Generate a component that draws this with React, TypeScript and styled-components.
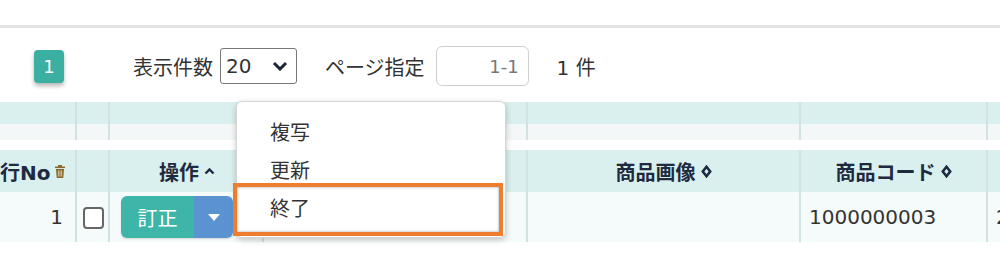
import React from 'react';
import styled, { createGlobalStyle } from 'styled-components';

const GlobalStyle = createGlobalStyle`
  body {
    margin: 0;
    background: #fff;
    font-family: 'DejaVu Sans', 'Noto Sans CJK JP', sans-serif;
    color: #333;
  }
`;

const Page = styled.div`
  width: 1000px;
  height: 254px;
  overflow: hidden;
  position: relative;
`;

const TopBar = styled.div`
  height: 25px;
  border-bottom: 3px solid #e3e3e3;
`;

const Pager = styled.div`
  height: 74px;
  display: flex;
  align-items: center;
  padding-left: 34px;
  padding-top: 2px;
  box-sizing: border-box;
  font-size: 20px;
`;

const PageBadge = styled.div`
  width: 30px;
  height: 33px;
  border-radius: 4px;
  background: #3aafa2;
  color: #fff;
  font-size: 18px;
  display: flex;
  align-items: center;
  justify-content: center;
  box-shadow: 0 3px 4px rgba(0, 0, 0, 0.28);
  margin-right: 69px;
`;

const Label = styled.span<{ $gap?: number }>`
  margin-right: ${p => p.$gap ?? 7}px;
  white-space: nowrap;
`;

const SelectBox = styled.div`
  width: 77px;
  height: 36px;
  box-sizing: border-box;
  border: 1px solid #777;
  border-radius: 3px;
  display: flex;
  align-items: center;
  justify-content: space-between;
  padding: 0 8px 0 5px;
  font-size: 20px;
  margin-right: 28px;
`;

const PageInput = styled.div`
  width: 93px;
  height: 40px;
  box-sizing: border-box;
  border: 1px solid #cfcfcf;
  border-radius: 6px;
  display: flex;
  align-items: center;
  justify-content: flex-end;
  padding-right: 9px;
  color: #777;
  font-size: 18px;
  margin-right: 28px;
`;

const TableWrap = styled.div`
  position: relative;
`;

const Table = styled.table`
  width: 1040px;
  table-layout: fixed;
  border-collapse: collapse;
  font-size: 20px;
`;

type RowKind = 'band' | 'sub' | 'gap' | 'head' | 'data';

const rowBg: Record<RowKind, string> = {
  band: '#d9f0ee',
  sub: '#f3f7f7',
  gap: '#fff',
  head: '#d9f0ee',
  data: '#f5fbfa',
};

const rowHeight: Record<RowKind, number> = {
  band: 22,
  sub: 16,
  gap: 10,
  head: 42,
  data: 50,
};

const Row = styled.tr<{ $kind: RowKind }>`
  height: ${p => rowHeight[p.$kind]}px;
  background: ${p => rowBg[p.$kind]};

  & > td {
    padding: 0;
    border-right: ${p => (p.$kind === 'gap' ? 'none' : '2px solid #d2e2e0')};
  }
`;

const Cell = styled.td<{ $align?: 'left' | 'center' | 'right' }>`
  text-align: ${p => p.$align ?? 'left'};
  vertical-align: middle;
  white-space: nowrap;
  overflow: hidden;
`;

const HeadText = styled.span<{ $pr?: number }>`
  display: inline-flex;
  align-items: center;
  gap: 5px;
  font-weight: bold;
  color: #1f2a40;
  padding-right: ${p => p.$pr ?? 0}px;
`;

const NumText = styled.span`
  padding-right: 12px;
  color: #333;
`;

const Checkbox = styled.span`
  display: inline-block;
  width: 17px;
  height: 18px;
  border: 2px solid #666;
  border-radius: 4px;
  background: #fff;
  vertical-align: middle;
  margin-left: 6px;
`;

const SplitButton = styled.div`
  display: inline-flex;
  height: 42px;
  margin-left: 11px;
  vertical-align: middle;
  border-radius: 6px;
  overflow: hidden;
  box-shadow: 0 1px 2px rgba(0, 0, 0, 0.15);
`;

const MainPart = styled.div`
  width: 73px;
  background: #3db5a8;
  color: #fff;
  display: flex;
  align-items: center;
  justify-content: center;
  font-size: 20px;
`;

const CaretPart = styled.div`
  width: 39px;
  background: #5b92d0;
  display: flex;
  align-items: center;
  justify-content: center;
`;

const CodeText = styled.span`
  padding-left: 8px;
  color: #333;
`;

const Menu = styled.div`
  position: absolute;
  left: 236px;
  top: -1px;
  width: 270px;
  height: 137px;
  box-sizing: border-box;
  background: #fff;
  border: 1px solid #d6d6d6;
  border-radius: 6px;
  box-shadow: 0 2px 6px rgba(0, 0, 0, 0.22);
  padding-top: 10px;
  font-size: 20px;
`;

const MenuItem = styled.div`
  height: 38px;
  display: flex;
  align-items: center;
  padding-left: 33px;
  color: #333;
`;

const Highlight = styled.div`
  position: absolute;
  left: -4px;
  top: 81px;
  width: 270px;
  height: 53px;
  box-sizing: border-box;
  border: 4px solid #ee7d30;
  box-shadow: inset 0 0 3px rgba(0, 0, 0, 0.35);
`;

const TrashIcon = () => (
  <svg width="10" height="13" viewBox="0 0 10 13">
    <rect x="0" y="1.5" width="10" height="1.6" fill="#8a6a2c" />
    <rect x="3" y="0" width="4" height="2" fill="#8a6a2c" />
    <path d="M1 4h8l-0.7 9H1.7z" fill="#8a6a2c" />
    <path d="M3.4 5.5v6M5 5.5v6M6.6 5.5v6" stroke="#e5d8b8" strokeWidth="0.8" />
  </svg>
);

const SortIcon = () => (
  <svg width="11" height="13" viewBox="0 0 11 13">
    <path d="M5.5 1.8L9.2 6.5L5.5 11.2L1.8 6.5Z" fill="none" stroke="#1f2a40" strokeWidth="2.6" />
  </svg>
);

const AscIcon = () => (
  <svg width="11" height="8" viewBox="0 0 11 8">
    <path d="M1.5 6.5L5.5 2.5L9.5 6.5" fill="none" stroke="#1f2a40" strokeWidth="2.4" />
  </svg>
);

const ChevronDown = () => (
  <svg width="16" height="10" viewBox="0 0 16 10">
    <path d="M2 2L8 8L14 2" fill="none" stroke="#1a2235" strokeWidth="3" />
  </svg>
);

const Caret = () => (
  <svg width="12" height="7" viewBox="0 0 12 7">
    <path d="M0 0H12L6 7Z" fill="#fff" />
  </svg>
);

const widths = [76, 33, 154, 264, 273, 187, 53];

export default function App() {
  const emptyCells = widths.map((_, i) => <Cell key={i} />);
  return (
    <Page>
      <GlobalStyle />
      <TopBar />
      <Pager>
        <PageBadge>1</PageBadge>
        <Label>表示件数</Label>
        <SelectBox>
          <span>20</span>
          <ChevronDown />
        </SelectBox>
        <Label $gap={11}>ページ指定</Label>
        <PageInput>1-1</PageInput>
        <Label>1 件</Label>
      </Pager>
      <TableWrap>
        <Table>
          <colgroup>
            {widths.map((w, i) => (
              <col key={i} style={{ width: w }} />
            ))}
          </colgroup>
          <tbody>
            <Row $kind="band">{emptyCells}</Row>
            <Row $kind="sub">{emptyCells}</Row>
            <Row $kind="gap">{emptyCells}</Row>
            <Row $kind="head">
              <Cell $align="right">
                <HeadText $pr={16}>
                  行No
                  <TrashIcon />
                </HeadText>
              </Cell>
              <Cell />
              <Cell $align="right">
                <HeadText $pr={47}>
                  操作
                  <AscIcon />
                </HeadText>
              </Cell>
              <Cell />
              <Cell $align="center">
                <HeadText>
                  商品画像
                  <SortIcon />
                </HeadText>
              </Cell>
              <Cell $align="center">
                <HeadText>
                  商品コード
                  <SortIcon />
                </HeadText>
              </Cell>
              <Cell />
            </Row>
            <Row $kind="data">
              <Cell $align="right">
                <NumText>1</NumText>
              </Cell>
              <Cell>
                <Checkbox />
              </Cell>
              <Cell>
                <SplitButton>
                  <MainPart>訂正</MainPart>
                  <CaretPart>
                    <Caret />
                  </CaretPart>
                </SplitButton>
              </Cell>
              <Cell />
              <Cell />
              <Cell>
                <CodeText>1000000003</CodeText>
              </Cell>
              <Cell>
                <CodeText>2</CodeText>
              </Cell>
            </Row>
          </tbody>
        </Table>
        <Menu>
          <MenuItem>複写</MenuItem>
          <MenuItem>更新</MenuItem>
          <MenuItem>終了</MenuItem>
          <Highlight />
        </Menu>
      </TableWrap>
    </Page>
  );
}
